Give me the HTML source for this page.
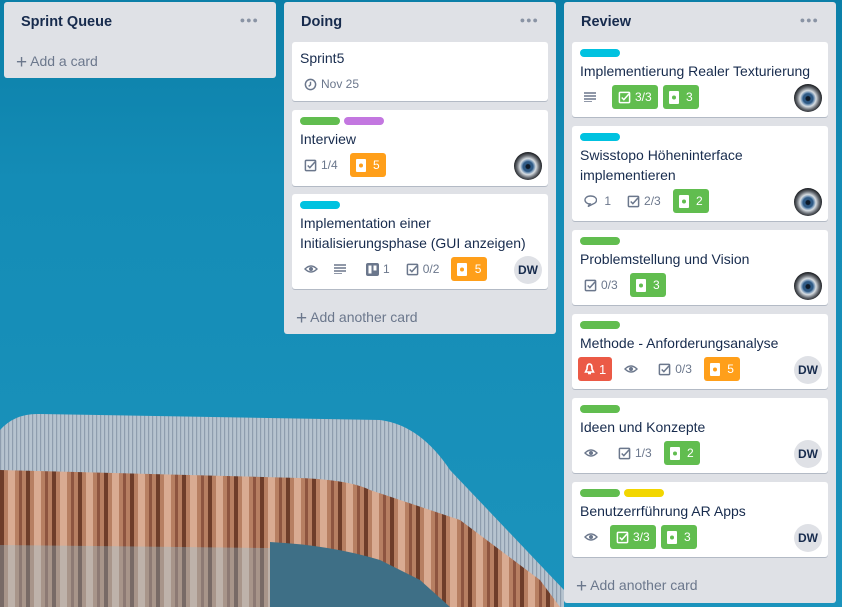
<!DOCTYPE html>
<html><head><meta charset="utf-8"><style>
*{box-sizing:border-box;margin:0;padding:0}
body{width:842px;height:607px;overflow:hidden;position:relative;font-family:"Liberation Sans",Arial,sans-serif;background:linear-gradient(180deg,#0b7fa8 0%,#148cb6 30%,#1b93bc 100%)}
.list{position:absolute;background:#dfe1e6;border-radius:3px;width:272px}
.hd{height:40px;padding:0 17px;display:flex;align-items:center;justify-content:space-between;font-weight:bold;font-size:14.5px;color:#172b4d}
.dots{color:#8993a4;font-size:9px;letter-spacing:1px;margin-top:-4px}
.add{position:absolute;left:12px;color:#6b778c;font-size:14px}
.add b{font-weight:normal;font-size:19px;position:relative;top:2px;margin-right:3px}
.card{position:absolute;left:8px;width:256px;background:#fff;border-radius:3px;box-shadow:0 1px 0 #b3bac5;padding:6px 8px 0}
.lb{display:inline-block;width:40px;height:8px;border-radius:4px;margin-right:4px;vertical-align:top}
.lbs{height:8px;margin-bottom:4px;margin-top:1px;line-height:0}
.t{font-size:14px;line-height:20px;color:#172b4d}
.row{height:24px;margin-top:4px;display:flex;align-items:center;font-size:12px;color:#6b778c}
.bd{display:flex;align-items:center;margin-right:8px;height:24px;padding:0 4px}
.bd svg{margin-right:4px}
.pill{color:#fff;border-radius:3px;padding:0 6px}
.g{background:#61bd4f}.o{background:#ff9f1a}.r{background:#eb5a46}
.av{position:absolute;right:6px;width:28px;height:28px;border-radius:50%}
.eye{background:radial-gradient(circle at 50% 52%,#0d1a2a 0 2px,#2f5a85 3px 5px,#6c8fb2 6px,#d7dde2 8px,#6b7077 11px,#1f2226 14px)}
.dw{background:#dfe1e6;color:#172b4d;font-weight:bold;font-size:12px;display:flex;align-items:center;justify-content:center}
</style></head><body>
<svg style="position:absolute;left:0;top:0" width="842" height="607">
<defs>
<pattern id="st" width="4" height="10" patternUnits="userSpaceOnUse"><rect width="4" height="10" fill="#b6c3cf"/><rect width="1.2" height="10" fill="#8e9dae"/></pattern>
<pattern id="br" width="26" height="60" patternUnits="userSpaceOnUse"><rect width="26" height="60" fill="#b77f62"/><rect x="0" width="4" height="60" fill="#6e3d2a"/><rect x="8" width="7" height="60" fill="#d9ab92"/><rect x="19" width="3" height="60" fill="#8e5540"/></pattern>
</defs>
<path d="M0,430 Q15,413 40,414 L380,420 Q420,425 450,470 L564,590 L564,607 L0,607 Z" fill="url(#st)"/>
<path d="M0,470 L300,478 Q350,480 370,490 L460,520 L540,580 L560,607 L0,607 Z" fill="url(#br)"/>
<path d="M0,545 L270,548 L270,607 L0,607Z" fill="#8cc0d6" opacity=".35"/>
<path d="M270,542 Q330,545 380,560 L420,580 L450,607 L270,607 Z" fill="#3e6f86"/>
</svg>

<div class="list" style="left:4px;top:2px;height:76px">
<div class="hd">Sprint Queue<span class="dots">●●●</span></div>
<div class="add" style="top:48px"><b>+</b>Add a card</div>
</div>

<div class="list" style="left:284px;top:2px;height:332px">
<div class="hd">Doing<span class="dots">●●●</span></div>
<div class="card" style="top:40px;height:59px"><div class="t">Sprint5</div>
<div class="row"><div class="bd"><svg width="13" height="13" viewBox="0 0 14 14"><circle cx="7" cy="7" r="5.5" fill="none" stroke="#6b778c" stroke-width="1.6"/><path d="M7 4v3.3L5 9" stroke="#6b778c" stroke-width="1.5" fill="none"/></svg>Nov 25</div></div></div>
<div class="card" style="top:108px;height:76px"><div class="lbs"><span class="lb g"></span><span class="lb" style="background:#c377e0"></span></div><div class="t">Interview</div>
<div class="row"><div class="bd"><svg width="13" height="13" viewBox="0 0 14 14"><rect x="1.5" y="1.5" width="11" height="11" rx="1" fill="none" stroke="#6b778c" stroke-width="1.6"/><path d="M4 7l2.3 2.3L12 3" stroke="#6b778c" stroke-width="1.6" fill="none"/></svg>1/4</div><div class="bd pill o"><svg width="10" height="13"><rect width="10" height="13" rx="1" fill="#fff"/><circle cx="5" cy="6.5" r="2" fill="#ff9f1a"/></svg>&nbsp;5</div></div>
<div class="av eye" style="top:42px"></div></div>
<div class="card" style="top:192px;height:95px"><div class="lbs"><span class="lb" style="background:#00c2e0"></span></div><div class="t">Implementation einer Initialisierungsphase (GUI anzeigen)</div>
<div class="row"><div class="bd" style="margin-right:4px"><svg width="14" height="10"><path d="M1 5Q7 -1 13 5Q7 11 1 5Z" fill="none" stroke="#6b778c" stroke-width="1.4"/><circle cx="7" cy="5" r="2" fill="#6b778c"/></svg></div><div class="bd"><svg width="12" height="10"><path d="M0 1h12M0 4h12M0 7h12M0 10h8" stroke="#6b778c" stroke-width="1.5"/></svg></div><div class="bd"><svg width="13" height="13"><rect width="13" height="13" rx="2" fill="#6b778c"/><rect x="2.5" y="2.5" width="3" height="8" fill="#fff"/><rect x="7.5" y="2.5" width="3" height="5" fill="#fff"/></svg>1</div><div class="bd"><svg width="13" height="13" viewBox="0 0 14 14"><rect x="1.5" y="1.5" width="11" height="11" rx="1" fill="none" stroke="#6b778c" stroke-width="1.6"/><path d="M4 7l2.3 2.3L12 3" stroke="#6b778c" stroke-width="1.6" fill="none"/></svg>0/2</div><div class="bd pill o"><svg width="10" height="13"><rect width="10" height="13" rx="1" fill="#fff"/><circle cx="5" cy="6.5" r="2" fill="#ff9f1a"/></svg>&nbsp;5</div></div>
<div class="av dw" style="top:62px">DW</div></div>
<div class="add" style="top:304px"><b>+</b>Add another card</div>
</div>

<div class="list" style="left:564px;top:2px;height:601px">
<div class="hd">Review<span class="dots">●●●</span></div>

<div class="card" style="top:40px;height:75px"><div class="lbs"><span class="lb" style="background:#00c2e0"></span></div><div class="t">Implementierung Realer Texturierung</div>
<div class="row"><div class="bd"><svg width="12" height="10"><path d="M0 1h12M0 4h12M0 7h12M0 10h8" stroke="#6b778c" stroke-width="1.5"/></svg></div><div class="bd pill g" style="margin-right:5px"><svg width="13" height="13" viewBox="0 0 14 14"><rect x="1.5" y="1.5" width="11" height="11" rx="1" fill="none" stroke="#fff" stroke-width="1.6"/><path d="M4 7l2.3 2.3L12 3" stroke="#fff" stroke-width="1.6" fill="none"/></svg>3/3</div><div class="bd pill g"><svg width="10" height="13"><rect width="10" height="13" rx="1" fill="#fff"/><circle cx="5" cy="6.5" r="2" fill="#61bd4f"/></svg>&nbsp;3</div></div>
<div class="av eye" style="top:42px"></div></div>

<div class="card" style="top:124px;height:95px"><div class="lbs"><span class="lb" style="background:#00c2e0"></span></div><div class="t">Swisstopo Höheninterface implementieren</div>
<div class="row"><div class="bd"><svg width="13" height="12"><path d="M6.5 1C3 1 1 3 1 5s2 4 5 4l-2 2.5 5-2.5c2-.7 3.5-2 3.5-4 0-2-2-4-6-4z" fill="none" stroke="#6b778c" stroke-width="1.4"/></svg>&nbsp;1</div><div class="bd"><svg width="13" height="13" viewBox="0 0 14 14"><rect x="1.5" y="1.5" width="11" height="11" rx="1" fill="none" stroke="#6b778c" stroke-width="1.6"/><path d="M4 7l2.3 2.3L12 3" stroke="#6b778c" stroke-width="1.6" fill="none"/></svg>2/3</div><div class="bd pill g"><svg width="10" height="13"><rect width="10" height="13" rx="1" fill="#fff"/><circle cx="5" cy="6.5" r="2" fill="#61bd4f"/></svg>&nbsp;2</div></div>
<div class="av eye" style="top:62px"></div></div>

<div class="card" style="top:228px;height:75px"><div class="lbs"><span class="lb g"></span></div><div class="t">Problemstellung und Vision</div>
<div class="row"><div class="bd"><svg width="13" height="13" viewBox="0 0 14 14"><rect x="1.5" y="1.5" width="11" height="11" rx="1" fill="none" stroke="#6b778c" stroke-width="1.6"/><path d="M4 7l2.3 2.3L12 3" stroke="#6b778c" stroke-width="1.6" fill="none"/></svg>0/3</div><div class="bd pill g"><svg width="10" height="13"><rect width="10" height="13" rx="1" fill="#fff"/><circle cx="5" cy="6.5" r="2" fill="#61bd4f"/></svg>&nbsp;3</div></div>
<div class="av eye" style="top:42px"></div></div>

<div class="card" style="top:312px;height:75px"><div class="lbs"><span class="lb g"></span></div><div class="t">Methode - Anforderungsanalyse</div>
<div class="row" style="margin-left:-2px"><div class="bd pill r" style="font-size:13px"><svg width="11" height="12"><path d="M5.5 1C3 1 3 4 3 6L1.5 9h8L8 6c0-2 0-5-2.5-5zM4 10.5h3" stroke="#fff" stroke-width="1.6" fill="none"/></svg>1</div><div class="bd"><svg width="14" height="10"><path d="M1 5Q7 -1 13 5Q7 11 1 5Z" fill="none" stroke="#6b778c" stroke-width="1.4"/><circle cx="7" cy="5" r="2" fill="#6b778c"/></svg></div><div class="bd"><svg width="13" height="13" viewBox="0 0 14 14"><rect x="1.5" y="1.5" width="11" height="11" rx="1" fill="none" stroke="#6b778c" stroke-width="1.6"/><path d="M4 7l2.3 2.3L12 3" stroke="#6b778c" stroke-width="1.6" fill="none"/></svg>0/3</div><div class="bd pill o"><svg width="10" height="13"><rect width="10" height="13" rx="1" fill="#fff"/><circle cx="5" cy="6.5" r="2" fill="#ff9f1a"/></svg>&nbsp;5</div></div>
<div class="av dw" style="top:42px">DW</div></div>

<div class="card" style="top:396px;height:75px"><div class="lbs"><span class="lb g"></span></div><div class="t">Ideen und Konzepte</div>
<div class="row"><div class="bd"><svg width="14" height="10"><path d="M1 5Q7 -1 13 5Q7 11 1 5Z" fill="none" stroke="#6b778c" stroke-width="1.4"/><circle cx="7" cy="5" r="2" fill="#6b778c"/></svg></div><div class="bd"><svg width="13" height="13" viewBox="0 0 14 14"><rect x="1.5" y="1.5" width="11" height="11" rx="1" fill="none" stroke="#6b778c" stroke-width="1.6"/><path d="M4 7l2.3 2.3L12 3" stroke="#6b778c" stroke-width="1.6" fill="none"/></svg>1/3</div><div class="bd pill g"><svg width="10" height="13"><rect width="10" height="13" rx="1" fill="#fff"/><circle cx="5" cy="6.5" r="2" fill="#61bd4f"/></svg>&nbsp;2</div></div>
<div class="av dw" style="top:42px">DW</div></div>

<div class="card" style="top:480px;height:75px"><div class="lbs"><span class="lb g"></span><span class="lb" style="background:#f2d600"></span></div><div class="t">Benutzerrführung AR Apps</div>
<div class="row"><div class="bd" style="margin-right:4px"><svg width="14" height="10"><path d="M1 5Q7 -1 13 5Q7 11 1 5Z" fill="none" stroke="#6b778c" stroke-width="1.4"/><circle cx="7" cy="5" r="2" fill="#6b778c"/></svg></div><div class="bd pill g" style="margin-right:5px"><svg width="13" height="13" viewBox="0 0 14 14"><rect x="1.5" y="1.5" width="11" height="11" rx="1" fill="none" stroke="#fff" stroke-width="1.6"/><path d="M4 7l2.3 2.3L12 3" stroke="#fff" stroke-width="1.6" fill="none"/></svg>3/3</div><div class="bd pill g"><svg width="10" height="13"><rect width="10" height="13" rx="1" fill="#fff"/><circle cx="5" cy="6.5" r="2" fill="#61bd4f"/></svg>&nbsp;3</div></div>
<div class="av dw" style="top:42px">DW</div></div>

<div class="add" style="top:572px"><b>+</b>Add another card</div>
</div>
</body></html>
